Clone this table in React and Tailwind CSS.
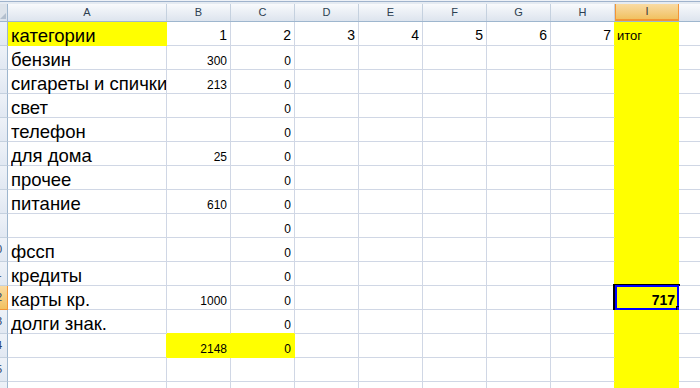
import React from "react";

// Column letters and widths (border included)
const COLS = [
  { key: "A", w: "w-[159px]" },
  { key: "B", w: "w-[64px]" },
  { key: "C", w: "w-[64px]" },
  { key: "D", w: "w-[64px]" },
  { key: "E", w: "w-[64px]" },
  { key: "F", w: "w-[64px]" },
  { key: "G", w: "w-[64px]" },
  { key: "H", w: "w-[64px]" },
  { key: "I", w: "w-[64px]" },
  { key: "J", w: "w-[64px]" },
];

// Sheet contents: row number -> { column: value }
const DATA = {
  1: { A: "категории", B: "1", C: "2", D: "3", E: "4", F: "5", G: "6", H: "7", I: "итог" },
  2: { A: "бензин", B: "300", C: "0" },
  3: { A: "сигареты и спички", B: "213", C: "0" },
  4: { A: "свет", C: "0" },
  5: { A: "телефон", C: "0" },
  6: { A: "для дома", B: "25", C: "0" },
  7: { A: "прочее", C: "0" },
  8: { A: "питание", B: "610", C: "0" },
  9: { C: "0" },
  10: { A: "фссп", C: "0" },
  11: { A: "кредиты", C: "0" },
  12: { A: "карты кр.", B: "1000", C: "0", I: "717" },
  13: { A: "долги знак.", C: "0" },
  14: { B: "2148", C: "0" },
  15: {},
  16: {},
};

const ROWS = Object.keys(DATA).map(Number);
const ACTIVE_ROW = 12;

function isYellow(row, col) {
  if (col === "I") return true;
  if (row === 1 && col === "A") return true;
  if (row === 14 && (col === "B" || col === "C")) return true;
  return false;
}

function nextCol(col) {
  const i = COLS.findIndex((c) => c.key === col);
  return COLS[i + 1] ? COLS[i + 1].key : null;
}

function ColumnHeader({ col }) {
  const active = col.key === "I";
  return (
    <div
      className={
        col.w +
        " shrink-0 h-full flex items-center justify-center border-r text-[11px] leading-none " +
        (active
          ? "bg-gradient-to-b from-[#f9dba3] to-[#f1c15f] border-r-[#f29536] border-l border-l-[#f29536] border-b-2 border-b-[#f29536] text-[#3b3b3b]"
          : "bg-gradient-to-b from-[#f8fafc] to-[#dde4ee] border-r-[#c5d1df] text-[#2c3e50]")
      }
    >
      {col.key}
    </div>
  );
}

function RowHeader({ row }) {
  const active = row === ACTIVE_ROW;
  return (
    <div
      className={
        "w-[8px] shrink-0 h-full overflow-hidden flex items-center border-r border-b " +
        (active
          ? "bg-gradient-to-b from-[#f9dba3] to-[#f1c15f] border-r-[#f29536] border-b-[#f29536]"
          : "bg-gradient-to-b from-[#eef2f8] to-[#e1e8f2] border-r-[#9eb6ce] border-b-[#c5d1df]")
      }
    >
      <div className="w-[26px] -ml-[17px] shrink-0 text-center text-[11px] leading-none text-[#27406a]">
        {row}
      </div>
    </div>
  );
}

function SelectionBox() {
  return (
    <div className="absolute -left-[2px] -top-[2px] w-[67px] h-[27px] border border-l-2 border-black pointer-events-none">
      <div className="w-full h-full border-2 border-[#0000ff]" />
      <div className="absolute left-[61px] top-[21px] w-[6px] h-[6px] bg-[#0000ff] border border-black" />
    </div>
  );
}

function Cell({ row, col }) {
  const value = DATA[row][col.key];
  const yellow = isYellow(row, col.key);
  const nx = nextCol(col.key);
  const rightYellow = yellow || (nx && isYellow(row, nx));
  const belowYellow = yellow || (DATA[row + 1] && isYellow(row + 1, col.key));
  const leftAligned = col.key === "A" || (col.key === "I" && row === 1);

  let align = "";
  if (value !== undefined) {
    if (col.key === "A") {
      align = "pl-[3px] text-[18.5px]";
    } else if (col.key === "I" && row === 1) {
      align = "pl-[2px] pb-[3px] text-[13px]";
    } else if (col.key === "I") {
      align = "pr-[3px] pb-[2px] text-[14px] font-bold";
    } else if (row === 1) {
      align = "pr-[3px] pb-[3px] text-[14px]";
    } else {
      align = "pr-[3px] pb-[2px] text-[12px]";
    }
  }

  return (
    <div
      className={
        col.w +
        " shrink-0 h-full relative flex items-end border-r border-b text-black " +
        (yellow ? "bg-[#ffff00] " : "bg-white ") +
        (rightYellow ? "border-r-[#ffff00] " : "border-r-[#d0d7e5] ") +
        (belowYellow ? "border-b-[#ffff00] " : "border-b-[#d0d7e5] ") +
        align
      }
    >
      <div className={"flex w-full overflow-x-clip " + (leftAligned ? "justify-start" : "justify-end")}>
        {value !== undefined && <span className="whitespace-nowrap leading-none">{value}</span>}
      </div>
      {row === ACTIVE_ROW && col.key === "I" && <SelectionBox />}
    </div>
  );
}

export default function App() {
  return (
    <div
      className="w-[700px] h-[388px] overflow-hidden bg-white"
      style={{ fontFamily: '"Liberation Sans", Arial, sans-serif' }}
    >
      {/* strip above the column headers */}
      <div className="h-px bg-[#eef2f7]" />
      <div className="h-px bg-[#9fb3cc]" />
      <div className="h-[2px] bg-[#e5ebf2]" />

      {/* column headers */}
      <div className="flex h-[18px] border-b border-[#9eb6ce]">
        <div className="w-[8px] shrink-0 h-full bg-[#dde3ea] border-r border-[#9eb6ce] flex items-end">
          <svg width="7" height="16" viewBox="0 0 7 16" className="block">
            <polygon points="0,14 6,8 6,14" fill="#b3bfcd" />
          </svg>
        </div>
        {COLS.map((c) => (
          <ColumnHeader key={c.key} col={c} />
        ))}
      </div>

      {/* sheet rows */}
      {ROWS.map((r) => (
        <div key={r} className="flex h-[24px]">
          <RowHeader row={r} />
          {COLS.map((c) => (
            <Cell key={c.key} row={r} col={c} />
          ))}
        </div>
      ))}
    </div>
  );
}
